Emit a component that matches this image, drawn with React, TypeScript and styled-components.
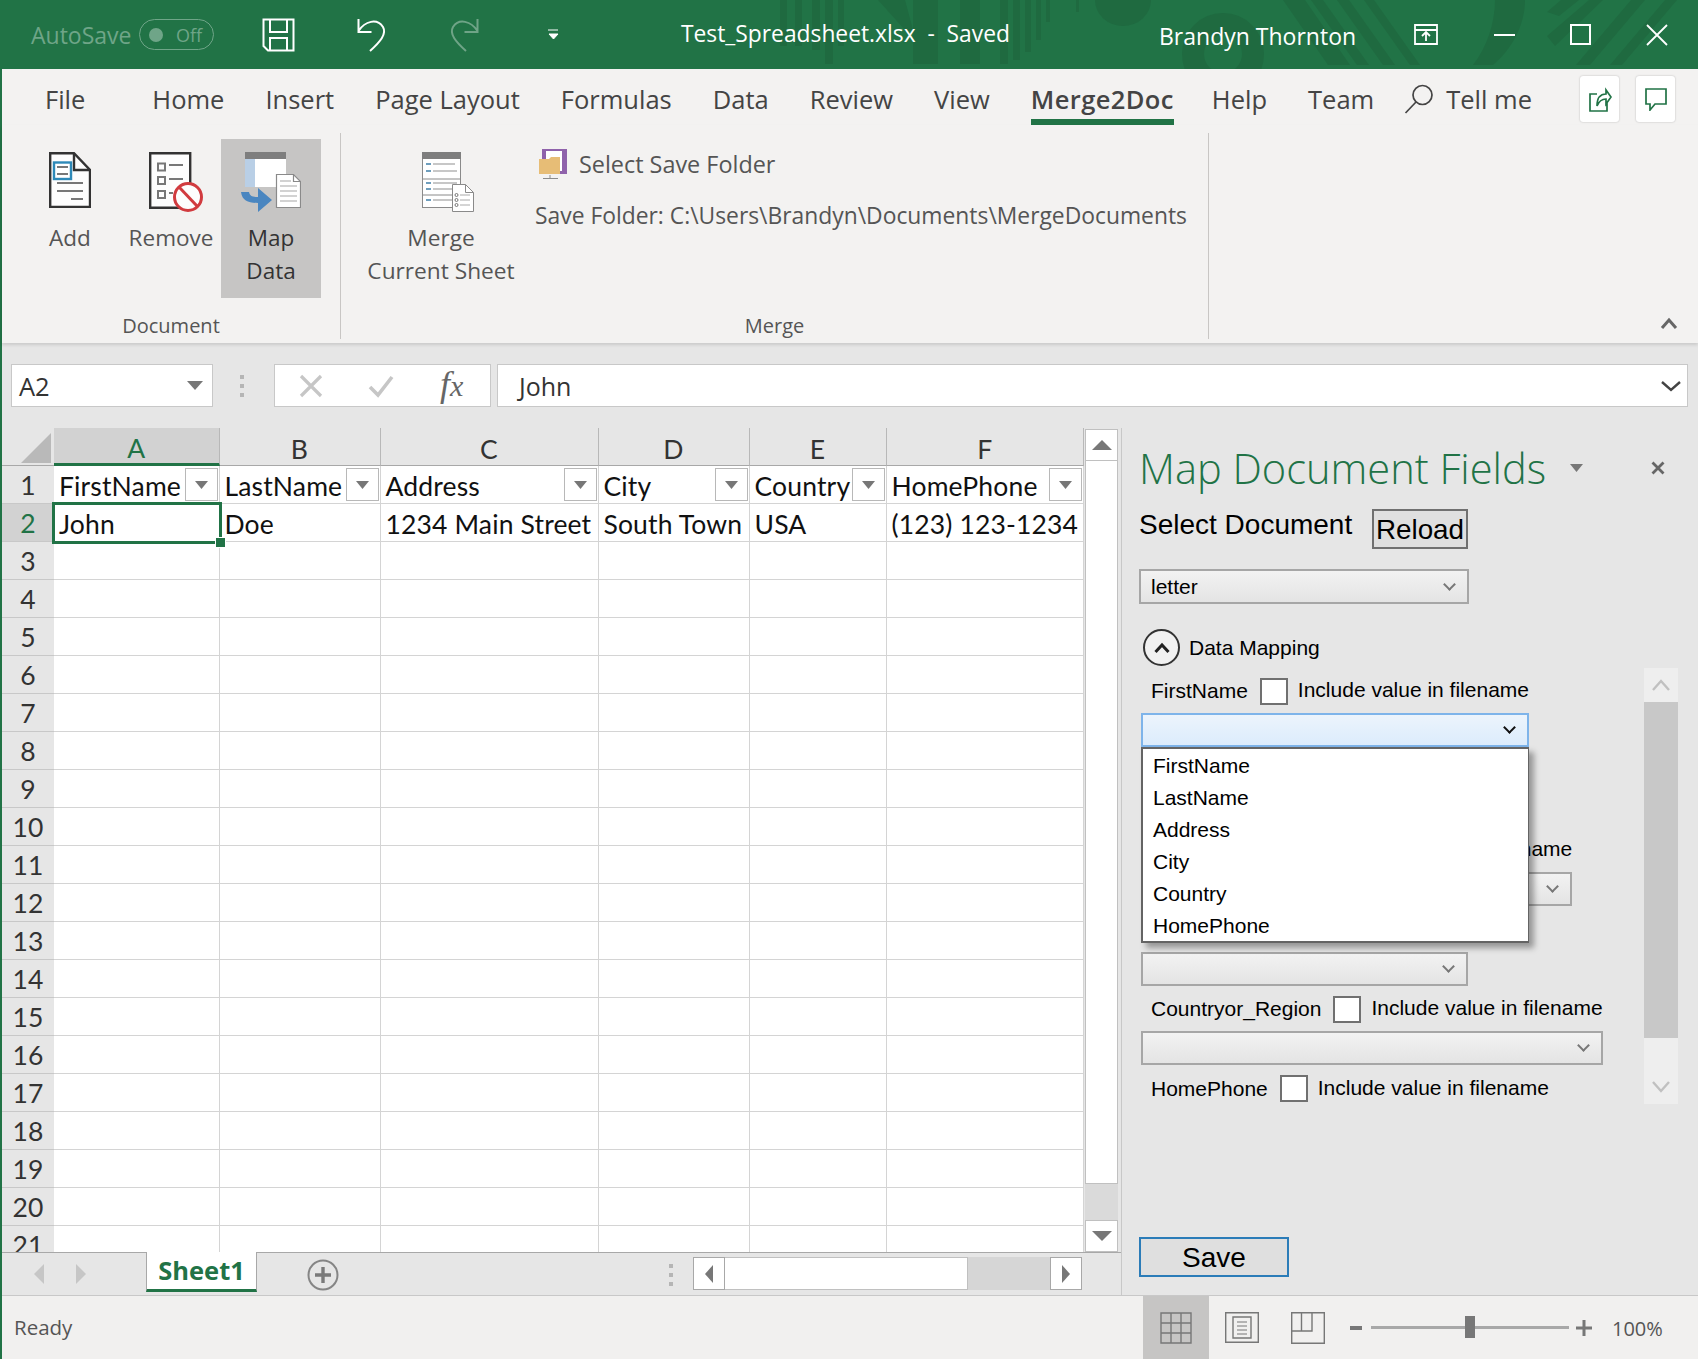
import React from "react";
import styled, { createGlobalStyle } from "styled-components";

const GREEN = "#217346";
const ROW_COUNT = 21;
const COLUMNS = ["A", "B", "C", "D", "E", "F"];
const HEAD = ["FirstName", "LastName", "Address", "City", "Country", "HomePhone"];
const ROW2 = ["John", "Doe", "1234 Main Street", "South Town", "USA", "(123) 123-1234"];
const TABS = ["Home", "Insert", "Page Layout", "Formulas", "Data", "Review", "View"];
const FIELDS = ["FirstName", "LastName", "AddressLine_1", "City", "Countryor_Region", "HomePhone"];
const OPTIONS = ["FirstName", "LastName", "Address", "City", "Country", "HomePhone"];

const GlobalStyle = createGlobalStyle`
  html, body { margin: 0; padding: 0; background: #e6e6e6; }
  * { box-sizing: border-box; }
  #root { width: 1698px; height: 1359px; overflow: hidden; }
`;

export default function App() {
  return (
    <Page>
      <GlobalStyle />
      <TitleBar>
        <TitlePattern viewBox="0 0 1698 69">
          <g fill="#1f6a40">
            <rect x="780" width="7" height="46" />
            <rect x="795" width="7" height="46" />
            <rect x="812" width="8" height="50" />
            <rect x="825" y="0" width="8" height="64" />
            <rect x="838" width="6" height="46" />
            <path d="M878 0h27l8 30v34h25V0h-25v30h-8z" />
            <rect x="960" width="20" height="64" />
            <rect x="1000" width="8" height="64" />
            <rect x="1013" width="7" height="60" />
            <rect x="1025" width="6" height="52" />
            <rect x="1036" width="5" height="40" />
            <rect x="1046" width="4" height="22" />
            <rect x="1076" width="3" height="12" />
            <path d="M1095 0a28 26 0 0 0 56 0z" />
            <path d="M1283 0h22l45 65h-22zM1311 0h12l46 65h-12zM1337 0h12l46 65h-12zM1364 0h10l46 65h-10z" />
            <path d="M1495 0h30c0 26-14 50-32 65h-20c14-18 22-42 22-65z" />
            <path d="M1547 12l14-12h18l-20 16zM1547 36l42-36h14l-48 46zM1576 65l55-65h14l-55 65zM1610 65l55-65h12l-55 65z" />
          </g>
          <circle cx="1223" cy="54" r="30" fill="none" stroke="#1f6a40" strokeWidth="22" />
        </TitlePattern>
        <AutoSave>AutoSave</AutoSave>
        <Toggle>
          <ToggleDot />
          <span>Off</span>
        </Toggle>
        <QuickIcon $left={48} width="33" height="34" viewBox="0 0 33 34">
          <path d="M1.500 1.500h30v31H6l-4.500-4.500z" fill="none" stroke="#fff" strokeWidth="2" />
          <path d="M8 2v12h17V2M8 33V20h17v13" fill="none" stroke="#fff" strokeWidth="2" />
        </QuickIcon>
        <QuickIcon $left={62} width="30" height="34" viewBox="0 0 30 34">
          <path d="M1.500 1v13h13M1.500 13C8 3 20 0 26 9c4 7-3 15-13 24" fill="none" stroke="#fff" strokeWidth="2" />
        </QuickIcon>
        <QuickIcon $left={62} width="30" height="34" viewBox="0 0 30 34" opacity={0.35}>
          <path d="M28.500 1v13h-13M28.500 13C22 3 10 0 4 9c-4 7 3 15 13 24" fill="none" stroke="#fff" strokeWidth="2" />
        </QuickIcon>
        <QuickIcon $left={69} width="11" height="12" viewBox="0 0 11 12">
          <path d="M0 1h10M1 5h9l-4.500 5z" fill="#fff" stroke="#fff" strokeWidth="1" />
        </QuickIcon>
        <FileName>Test_Spreadsheet.xlsx&nbsp; - &nbsp;Saved</FileName>
        <UserName>Brandyn Thornton</UserName>
        <QuickIcon $left={61} width="24" height="21" viewBox="0 0 24 21">
          <path d="M1 1h22v19H1zM1 6h22M12 17V9M8 12l4-4 4 4" fill="none" stroke="#fff" strokeWidth="1.800" />
        </QuickIcon>
        <QuickIcon $left={56} width="21" height="4" viewBox="0 0 21 4">
          <path d="M0 2h21" stroke="#fff" strokeWidth="2" />
        </QuickIcon>
        <QuickIcon $left={55} width="21" height="21" viewBox="0 0 21 21">
          <rect x="1" y="1" width="19" height="19" fill="none" stroke="#fff" strokeWidth="2" />
        </QuickIcon>
        <QuickIcon $left={55} width="22" height="22" viewBox="0 0 22 22">
          <path d="M1 1l20 20M21 1L1 21" stroke="#fff" strokeWidth="1.800" />
        </QuickIcon>
      </TitleBar>

      <Body>
        <TabRow>
          <Tab $gap={67}>File</Tab>
          {TABS.map((t) => (
            <Tab key={t} $gap={41}>
              {t}
            </Tab>
          ))}
          <ActiveTab $gap={38}>Merge2Doc</ActiveTab>
          <Tab $gap={41}>Help</Tab>
          <Tab $gap={30}>Team</Tab>
          <TellMe>
            <svg width="30" height="30" viewBox="0 0 30 30">
              <circle cx="18.500" cy="11" r="9.500" fill="none" stroke="#444" strokeWidth="1.700" />
              <path d="M12 18L1.500 29" stroke="#444" strokeWidth="1.700" />
            </svg>
            Tell me
          </TellMe>
          <TabActions>
            <TabAction>
              <svg width="24" height="26" viewBox="0 0 24 26">
                <path d="M9 8H2v17h17v-8M9 20c0-8 3-12 9-12V4l5 7-5 7v-5c-4 0-7 2-9 7z" fill="none" stroke={GREEN} strokeWidth="1.700" />
              </svg>
            </TabAction>
            <TabAction>
              <svg width="24" height="24" viewBox="0 0 24 24">
                <path d="M2 2h20v15H11l-5 6v-6H2z" fill="none" stroke={GREEN} strokeWidth="1.700" />
              </svg>
            </TabAction>
          </TabActions>
        </TabRow>

        <Ribbon>
          <DocumentGroup>
            <GroupButtons $inset={28}>
              <AddButton>
                <IconBox>
                  <svg width="42" height="56" viewBox="0 0 42 56">
                    <path d="M1.200 1.200H25L41 18v37H1.200z" fill="#fdfdfd" stroke="#333" strokeWidth="2.400" />
                    <path d="M25 1.200V18h16" fill="none" stroke="#333" strokeWidth="2.400" />
                    <rect x="5" y="10.500" width="17" height="16.500" fill="#fff" stroke="#2d89b8" strokeWidth="2.400" />
                    <path d="M8 15h11M8 22h11M8 31h26M8 39h26M22 47h12" stroke="#777" strokeWidth="2" />
                  </svg>
                </IconBox>
                Add
              </AddButton>
              <RibbonButton>
                <IconBox $nudge={10}>
                  <svg width="54" height="60" viewBox="0 0 54 60">
                    <path d="M1.200 1.200h40v54.600H1.200z" fill="#fdfdfd" stroke="#333" strokeWidth="2.400" />
                    <path d="M9 11.500h7v7H9zM9 25h7v7H9zM9 39h7v7H9z" fill="none" stroke="#777" strokeWidth="2" />
                    <path d="M20 13h14M20 27h14M20 41h4" stroke="#777" strokeWidth="2" />
                    <circle cx="39" cy="45" r="13.500" fill="#fdfdfd" stroke="#d13b3f" strokeWidth="3" />
                    <path d="M30 35l18 19" stroke="#d13b3f" strokeWidth="3" />
                  </svg>
                </IconBox>
                Remove
              </RibbonButton>
              <RibbonButton $active>
                <IconBox>
                  <svg width="60" height="60" viewBox="0 0 60 60">
                    <rect x="4" y="0" width="41" height="35" fill="#fff" />
                    <rect x="4" y="7" width="10" height="28" fill="#b9cfe6" />
                    <rect x="4" y="0" width="41" height="7" fill="#7e7e7e" />
                    <path d="M35.500 22.500h17l7 7v26h-24z" fill="#fff" stroke="#8a8a8a" strokeWidth="1.200" />
                    <path d="M52.500 22.500v7h7" fill="none" stroke="#8a8a8a" strokeWidth="1.200" />
                    <path d="M39 29h11M39 34h17M39 39h17M39 44h17M39 49h17" stroke="#a5a5a5" strokeWidth="1.200" />
                    <path d="M0 40h8c1 4 3 5 9 5v-9l14 12-14 12v-9C8 51 1 49 0 40z" fill="#4a86c0" />
                  </svg>
                </IconBox>
                Map
                <br />
                Data
              </RibbonButton>
            </GroupButtons>
            <GroupLabel>Document</GroupLabel>
          </DocumentGroup>
          <MergeGroup>
            <GroupButtons $inset={21}>
              <MergeButton>
                <IconBox $nudge={13}>
                  <svg width="52" height="60" viewBox="0 0 52 60">
                    <rect x="0.500" y="0.500" width="38" height="55" fill="#fff" stroke="#8a8a8a" />
                    <rect x="0" y="0" width="39" height="7" fill="#7e7e7e" />
                    <path d="M1 27h37M1 43h37" stroke="#8a8a8a" />
                    <path d="M4 12h5M4 19h5M4 31h5M4 37h5M4 48h5" stroke="#3f7fa8" strokeWidth="1.300" />
                    <path d="M11 12h22M11 19h24M11 31h24M11 37h24M11 48h24" stroke="#b5b5b5" strokeWidth="1.300" />
                    <path d="M30.500 32.500h13l8 8v19h-21z" fill="#fff" stroke="#8a8a8a" />
                    <path d="M43.500 32.500v8h8" fill="none" stroke="#8a8a8a" />
                    <circle cx="34.500" cy="43" r="1.500" fill="none" stroke="#777" />
                    <circle cx="34.500" cy="48" r="1.500" fill="none" stroke="#777" />
                    <circle cx="34.500" cy="53" r="1.500" fill="none" stroke="#777" />
                    <path d="M38 43h10M38 48h10M38 53h10" stroke="#aaa" />
                  </svg>
                </IconBox>
                Merge
                <br />
                Current Sheet
              </MergeButton>
              <FolderColumn>
                <FolderLink>
                  <svg width="28" height="30" viewBox="0 0 28 30">
                    <rect x="3" y="0" width="25" height="25" fill="#8f62ab" />
                    <rect x="7" y="2" width="16" height="20" fill="#fff" />
                    <path d="M0 10h10l2-2h9v17H0z" fill="#e7bd76" />
                    <path d="M11 26v3M4 29.500h15" stroke="#8a8a8a" />
                  </svg>
                  Select Save Folder
                </FolderLink>
                <FolderPath>Save Folder: C:\Users\Brandyn\Documents\MergeDocuments</FolderPath>
              </FolderColumn>
            </GroupButtons>
            <GroupLabel>Merge</GroupLabel>
          </MergeGroup>
          <RibbonEnd>
            <svg width="18" height="14" viewBox="0 0 18 14">
              <path d="M2 12l7-8 7 8" fill="none" stroke="#666" strokeWidth="3" />
            </svg>
          </RibbonEnd>
        </Ribbon>

        <FormulaBar>
          <NameBox>
            A2
            <svg width="16" height="10" viewBox="0 0 16 10">
              <path d="M0 0h16l-8 9z" fill="#777" />
            </svg>
          </NameBox>
          <GripDots />
          <FormulaButtons>
            <svg width="24" height="24" viewBox="0 0 24 24">
              <path d="M2 2l20 20M22 2L2 22" stroke="#c6c6c6" strokeWidth="3.200" />
            </svg>
            <svg width="26" height="24" viewBox="0 0 26 24">
              <path d="M2 13l8 8L24 3" fill="none" stroke="#c6c6c6" strokeWidth="3.600" />
            </svg>
            <FxLabel>
              f<i>x</i>
            </FxLabel>
          </FormulaButtons>
          <FormulaInput>
            John
            <svg width="22" height="12" viewBox="0 0 22 12">
              <path d="M2 2l9 8 9-8" fill="none" stroke="#444" strokeWidth="2.400" />
            </svg>
          </FormulaInput>
        </FormulaBar>

        <Main>
          <SheetColumn>
            <SheetRow>
              <Grid>
                <Corner>
                  <svg width="30" height="30" viewBox="0 0 30 30">
                    <path d="M0 30L30 0v30z" fill="#b9b9b9" />
                  </svg>
                </Corner>
                {COLUMNS.map((c, i) => (
                  <ColHead key={c} $active={i === 0}>
                    {c}
                  </ColHead>
                ))}
                {Array.from({ length: ROW_COUNT }, (_, r) => (
                  <React.Fragment key={r}>
                    <RowHead $active={r === 1}>{r + 1}</RowHead>
                    {COLUMNS.map((c, i) => (
                      <Cell key={c} $selected={r === 1 && i === 0}>
                        {r === 0 && HEAD[i]}
                        {r === 0 && (
                          <FilterButton>
                            <svg width="13" height="8" viewBox="0 0 13 8">
                              <path d="M0 0h13L6.500 8z" fill="#777" />
                            </svg>
                          </FilterButton>
                        )}
                        {r === 1 && ROW2[i]}
                        {r === 1 && i === 0 && <FillHandle />}
                      </Cell>
                    ))}
                  </React.Fragment>
                ))}
              </Grid>
              <VScroll>
                <ScrollEnd>
                  <svg width="20" height="10" viewBox="0 0 20 10">
                    <path d="M10 0l10 10H0z" fill="#777" />
                  </svg>
                </ScrollEnd>
                <VThumb />
                <VTrack />
                <ScrollEnd>
                  <svg width="20" height="10" viewBox="0 0 20 10">
                    <path d="M10 10L0 0h20z" fill="#777" />
                  </svg>
                </ScrollEnd>
              </VScroll>
            </SheetRow>
            <SheetTabs>
              <TabNav>
                <svg width="10" height="20" viewBox="0 0 10 20">
                  <path d="M10 0v20L0 10z" fill="#c6c6c6" />
                </svg>
                <svg width="10" height="20" viewBox="0 0 10 20">
                  <path d="M0 0v20l10-10z" fill="#c6c6c6" />
                </svg>
              </TabNav>
              <SheetTab>Sheet1</SheetTab>
              <AddSheet>
                <svg width="32" height="32" viewBox="0 0 32 32">
                  <circle cx="16" cy="16" r="14.500" fill="none" stroke="#858585" strokeWidth="2" />
                  <path d="M16 8v16M8 16h16" stroke="#7a7a7a" strokeWidth="3.400" />
                </svg>
              </AddSheet>
              <SplitDots />
              <HScroll>
                <HButton>
                  <svg width="8" height="18" viewBox="0 0 8 18">
                    <path d="M8 0v18L0 9z" fill="#777" />
                  </svg>
                </HButton>
                <HThumb />
                <HTrack />
                <HButton>
                  <svg width="8" height="18" viewBox="0 0 8 18">
                    <path d="M0 0v18l8-9z" fill="#777" />
                  </svg>
                </HButton>
              </HScroll>
            </SheetTabs>
          </SheetColumn>

          <TaskPane>
            <PaneHeader>
              <PaneTitle>Map Document Fields</PaneTitle>
              <PaneCaret viewBox="0 0 13 8" width="13" height="8">
                <path d="M0 0h13L6.500 8z" fill="#777" />
              </PaneCaret>
              <PaneClose viewBox="0 0 14 14" width="14" height="14">
                <path d="M1.500 1.500l11 11M12.500 1.500l-11 11" stroke="#666" strokeWidth="2.800" />
              </PaneClose>
            </PaneHeader>
            <DocumentRow>
              <DocumentLabel>Select Document</DocumentLabel>
              <ReloadButton>Reload</ReloadButton>
            </DocumentRow>
            <DocumentSelect>
              letter
              <Chevron />
            </DocumentSelect>
            <SectionRow>
              <SectionToggle>
                <svg width="18" height="12" viewBox="0 0 18 12">
                  <path d="M2.500 10L9 3l6.500 7" fill="none" stroke="#222" strokeWidth="3" />
                </svg>
              </SectionToggle>
              Data Mapping
            </SectionRow>
            <MappingPanel>
              <MappingList>
                {FIELDS.map((f, i) => (
                  <Field key={f}>
                    <FieldRow>
                      <span>{f}</span>
                      <CheckBox />
                      <IncludeText>Include value in filename</IncludeText>
                    </FieldRow>
                    {i === 0 ? (
                      <FocusedSelect>
                        <Chevron $dark />
                      </FocusedSelect>
                    ) : (
                      <FieldSelect>
                        <Chevron />
                      </FieldSelect>
                    )}
                    {i === 0 && (
                      <OptionList>
                        {OPTIONS.map((o) => (
                          <Option key={o}>{o}</Option>
                        ))}
                      </OptionList>
                    )}
                  </Field>
                ))}
              </MappingList>
              <PanelScroll>
                <PanelEnd>
                  <svg width="20" height="14" viewBox="0 0 20 14">
                    <path d="M2 12l8-9 8 9" fill="none" stroke="#c0c0c0" strokeWidth="2.400" />
                  </svg>
                </PanelEnd>
                <PanelThumb />
                <PanelTrack>
                  <svg width="20" height="14" viewBox="0 0 20 14">
                    <path d="M2 2l8 9 8-9" fill="none" stroke="#c0c0c0" strokeWidth="2.400" />
                  </svg>
                </PanelTrack>
              </PanelScroll>
            </MappingPanel>
            <SaveButton>Save</SaveButton>
          </TaskPane>
        </Main>

        <StatusBar>
          <Ready>Ready</Ready>
          <ViewButton $active>
            <svg width="32" height="32" viewBox="0 0 32 32">
              <path d="M1 1h30v30H1zM1 11h30M1 21h30M11 1v30M21 1v30" fill="none" stroke="#777" strokeWidth="1.400" />
            </svg>
          </ViewButton>
          <ViewButton>
            <svg width="34" height="31" viewBox="0 0 34 31">
              <path d="M.7.7h32.600v29.600H.7z" fill="none" stroke="#777" strokeWidth="1.400" />
              <path d="M8 5h18v21H8z" fill="none" stroke="#777" strokeWidth="1.400" />
              <path d="M12 10h10M12 14h10M12 18h10M12 22h10" stroke="#777" />
            </svg>
          </ViewButton>
          <ViewButton>
            <svg width="34" height="32" viewBox="0 0 34 32">
              <path d="M.7.7h32.600v30.600H.7zM.7 19h20.300V.7M10.500.7V19" fill="none" stroke="#777" strokeWidth="1.400" />
            </svg>
          </ViewButton>
          <ZoomMinus />
          <ZoomTrack>
            <ZoomThumb />
          </ZoomTrack>
          <ZoomPlus>
            <svg width="16" height="16" viewBox="0 0 16 16">
              <path d="M8 0v16M0 8h16" stroke="#777" strokeWidth="3" />
            </svg>
          </ZoomPlus>
          <ZoomValue>100%</ZoomValue>
        </StatusBar>
      </Body>
    </Page>
  );
}

const UI_FONT = `"Open Sans", "Noto Sans", sans-serif`;
const FORM_FONT = `"Liberation Sans", Arial, sans-serif`;

const Page = styled.div`
  width: 1698px;
  height: 1359px;
  display: flex;
  flex-direction: column;
  font-family: ${UI_FONT};
  color: #444;
  overflow: hidden;
`;

const TitleBar = styled.header`
  position: relative;
  height: 69px;
  flex: none;
  display: flex;
  align-items: center;
  padding-left: 31px;
  background: ${GREEN};
  color: #fff;
`;

const TitlePattern = styled.svg`
  position: absolute;
  left: 0;
  top: 0;
  width: 1698px;
  height: 69px;
`;

const AutoSave = styled.span`
  position: relative;
  font-size: 23px;
  color: #6fa588;
  width: 108px;
  white-space: nowrap;
`;

const Toggle = styled.div`
  position: relative;
  width: 75px;
  height: 31px;
  border: 1.500px solid #6fa588;
  border-radius: 16px;
  display: flex;
  align-items: center;
  padding-left: 9px;
  gap: 13px;
  font-size: 18px;
  color: #6fa588;
`;

const ToggleDot = styled.i`
  width: 14px;
  height: 14px;
  border-radius: 50%;
  background: #6fa588;
`;

const QuickIcon = styled.svg<{ $left: number }>`
  position: relative;
  flex: none;
  margin-left: ${(p) => p.$left}px;
`;

const FileName = styled.div`
  position: relative;
  margin-left: 122px;
  width: 335px;
  font-size: 22.800px;
  white-space: nowrap;
  margin-top: -2px;
`;

const UserName = styled.div`
  position: relative;
  margin-left: 143px;
  width: 194px;
  font-size: 23px;
  white-space: nowrap;
  margin-top: 3px;
`;

const Body = styled.div`
  flex: 1;
  display: flex;
  flex-direction: column;
  border-left: 2px solid ${GREEN};
  min-height: 0;
`;

const TabRow = styled.nav`
  height: 56px;
  flex: none;
  display: flex;
  align-items: flex-start;
  padding-left: 43px;
  background: #f3f2f1;
  font-size: 25.500px;
  color: #444;
  line-height: 60px;
`;

const Tab = styled.div<{ $gap: number }>`
  margin-right: ${(p) => p.$gap}px;
  white-space: nowrap;
  height: 56px;
`;

const ActiveTab = styled(Tab)`
  font-weight: 600;
  letter-spacing: 0.400px;
  border-bottom: 6px solid ${GREEN};
`;

const TellMe = styled.div`
  display: flex;
  align-items: center;
  gap: 12px;
  height: 60px;
`;

const TabActions = styled.div`
  display: flex;
  gap: 17px;
  margin-left: auto;
  margin-right: 23px;
  margin-top: 7px;
`;

const TabAction = styled.div`
  width: 39px;
  height: 46px;
  background: #fff;
  border-radius: 3px;
  box-shadow: 0 0 2px rgba(0, 0, 0, 0.25);
  display: flex;
  align-items: center;
  justify-content: center;
`;

const Ribbon = styled.section`
  height: 218px;
  flex: none;
  display: flex;
  background: #f3f2f1;
  box-shadow: 0 2px 3px rgba(0, 0, 0, 0.12);
  position: relative;
  padding-bottom: 4px;
`;

const DocumentGroup = styled.div`
  width: 339px;
  border-right: 1px solid #c8c6c4;
  margin-top: 8px;
  padding-top: 6px;
  display: flex;
  flex-direction: column;
`;

const MergeGroup = styled(DocumentGroup)`
  width: 868px;
`;

const GroupButtons = styled.div<{ $inset: number }>`
  display: flex;
  height: 164px;
  padding-left: ${(p) => p.$inset}px;
`;

const RibbonButton = styled.div<{ $active?: boolean }>`
  width: 100px;
  padding-top: 14px;
  text-align: center;
  font-size: 22.500px;
  line-height: 33px;
  color: ${(p) => (p.$active ? "#333" : "#555")};
  background: ${(p) => (p.$active ? "#c6c5c4" : "transparent")};
`;

const AddButton = styled(RibbonButton)`
  width: 80px;
  margin-right: 11px;
`;

const MergeButton = styled(RibbonButton)`
  width: 158px;
  white-space: nowrap;
  font-size: 22.700px;
`;

const IconBox = styled.div<{ $nudge?: number }>`
  height: 69px;
  margin-top: -1px;
  display: flex;
  justify-content: center;
  align-items: flex-start;
  padding-left: ${(p) => p.$nudge || 0}px;
`;

const GroupLabel = styled.div`
  text-align: center;
  font-size: 20px;
  color: #555;
  margin-top: 14px;
`;

const FolderColumn = styled.div`
  margin-left: 15px;
  color: #555;
  white-space: nowrap;
`;

const FolderLink = styled.div`
  display: flex;
  align-items: center;
  gap: 12px;
  height: 30px;
  margin-top: 10px;
  padding-left: 4px;
  font-size: 23.400px;
`;

const FolderPath = styled.div`
  margin-top: 20px;
  line-height: 34px;
  font-size: 22.850px;
`;

const RibbonEnd = styled.div`
  flex: 1;
  display: flex;
  justify-content: flex-end;
  align-items: flex-end;
  padding: 0 20px 9px 0;
`;

const FormulaBar = styled.div`
  height: 85px;
  flex: none;
  display: flex;
  align-items: flex-start;
  padding: 21px 10px 0 9px;
  background: #e6e6e6;
`;

const BoxBase = styled.div`
  height: 43px;
  background: #fff;
  border: 1px solid #c8c8c8;
  display: flex;
  align-items: center;
`;

const NameBox = styled(BoxBase)`
  width: 202px;
  padding: 0 9px 0 7px;
  justify-content: space-between;
  font-size: 25.500px;
  color: #333;
`;

const GripDots = styled.div`
  width: 4px;
  height: 22px;
  margin: 11px 30px 0 27px;
  background: repeating-linear-gradient(to bottom, #b5b5b5 0 4px, transparent 4px 9px);
`;

const FormulaButtons = styled(BoxBase)`
  width: 217px;
  padding-left: 24px;
  gap: 45px;
`;

const FxLabel = styled.span`
  font-family: "Liberation Serif", serif;
  font-style: italic;
  font-size: 36px;
  color: #666;
  margin-left: 1px;
  margin-top: -4px;
  i {
    font-size: 30px;
  }
`;

const FormulaInput = styled(BoxBase)`
  flex: 1;
  margin-left: 6px;
  padding: 0 5px 0 21px;
  justify-content: space-between;
  font-size: 25px;
  color: #333;
`;

const Main = styled.div`
  flex: 1;
  display: flex;
  min-height: 0;
  background: #e6e6e6;
`;

const SheetColumn = styled.div`
  width: 1120px;
  flex: none;
  display: flex;
  flex-direction: column;
  border-right: 1px solid #c8c8c8;
`;

const SheetRow = styled.div`
  height: 824px;
  flex: none;
  display: flex;
  overflow: hidden;
`;

const Grid = styled.div`
  display: grid;
  width: 1082px;
  grid-template-columns: 52px 165.500px 161px 218px 151px 137px 197.500px;
  grid-template-rows: 38px repeat(${ROW_COUNT}, 38px);
  font-family: Lato, "Open Sans", sans-serif;
  font-size: 26.500px;
  letter-spacing: 0.150px;
  color: #111;
  background: #fff;
`;

const HeadBase = styled.div`
  background: #e6e6e6;
  display: flex;
  align-items: center;
  justify-content: center;
  color: #333;
`;

const Corner = styled(HeadBase)`
  justify-content: flex-end;
  padding: 3px 3px 0 0;
  border-bottom: 1px solid #a8a8a8;
`;

const ColHead = styled(HeadBase)<{ $active?: boolean }>`
  padding-top: 5px;
  border-right: 1px solid #b8b8b8;
  background: ${(p) => (p.$active ? "#d2d2d2" : "#e6e6e6")};
  color: ${(p) => (p.$active ? GREEN : "#333")};
  border-bottom: ${(p) => (p.$active ? `3px solid ${GREEN}` : "1px solid #a8a8a8")};
`;

const RowHead = styled(HeadBase)<{ $active?: boolean }>`
  background: ${(p) => (p.$active ? "#d2d2d2" : "#e6e6e6")};
  color: ${(p) => (p.$active ? GREEN : "#333")};
  border-bottom: 1px solid #c8c8c8;
  padding-top: 1px;
`;

const Cell = styled.div<{ $selected?: boolean }>`
  position: relative;
  display: flex;
  align-items: center;
  padding: 2px 1px 0 5px;
  border-right: 1px solid #d4d4d4;
  border-bottom: 1px solid #d4d4d4;
  white-space: nowrap;
  ${(p) => p.$selected && `outline: 3px solid ${GREEN}; outline-offset: -1px; z-index: 2;`}
`;

const FilterButton = styled.div`
  margin-left: auto;
  width: 33px;
  height: 33px;
  margin-top: -2px;
  border: 1px solid #b8b8b8;
  background: #fff;
  display: flex;
  align-items: center;
  justify-content: center;
`;

const FillHandle = styled.i`
  position: absolute;
  right: -6px;
  bottom: -6px;
  width: 9px;
  height: 9px;
  background: ${GREEN};
  outline: 1px solid #fff;
`;

const VScroll = styled.div`
  width: 33px;
  margin-left: 1px;
  flex: none;
  display: flex;
  flex-direction: column;
  padding-top: 1px;
`;

const ScrollEnd = styled.div`
  height: 32px;
  background: #fff;
  border: 1px solid #c0c0c0;
  display: flex;
  align-items: center;
  justify-content: center;
  flex: none;
`;

const VThumb = styled.div`
  flex: none;
  height: 723px;
  background: #fff;
  border: 1px solid #c0c0c0;
  border-top: 0;
`;

const VTrack = styled.div`
  flex: 1;
  background: #dadada;
`;

const SheetTabs = styled.div`
  flex: 1;
  display: flex;
  align-items: flex-start;
  background: #e6e6e6;
  border-top: 1px solid #a8a8a8;
  position: relative;
`;

const TabNav = styled.div`
  width: 144px;
  height: 42px;
  display: flex;
  align-items: center;
  gap: 32px;
  padding-left: 32px;
`;

const SheetTab = styled.div`
  width: 111px;
  height: 40px;
  margin-top: -1px;
  background: #fff;
  border: 1px solid #a8a8a8;
  border-top: 0;
  border-bottom: 3px solid ${GREEN};
  text-align: center;
  font-family: ${UI_FONT};
  font-weight: 700;
  font-size: 25.500px;
  line-height: 37px;
  color: ${GREEN};
`;

const AddSheet = styled.div`
  width: 32px;
  height: 32px;
  margin: 6px 0 0 50px;
`;

const SplitDots = styled.div`
  width: 4px;
  height: 22px;
  margin: 11px 0 0 330px;
  background: repeating-linear-gradient(to bottom, #b5b5b5 0 4px, transparent 4px 9px);
`;

const HScroll = styled.div`
  width: 389px;
  height: 33px;
  margin: 4px 0 0 20px;
  display: flex;
`;

const HButton = styled.div`
  width: 32px;
  flex: none;
  background: #fff;
  border: 1px solid #a8a8a8;
  display: flex;
  align-items: center;
  justify-content: center;
`;

const HThumb = styled.div`
  width: 243px;
  background: #fff;
  border: 1px solid #c0c0c0;
  border-left: 0;
`;

const HTrack = styled.div`
  flex: 1;
  background: #d6d6d6;
`;

const TaskPane = styled.aside`
  flex: 1;
  display: flex;
  flex-direction: column;
  padding: 16px 0 18px 17px;
  background: #e6e6e6;
  color: #000;
  min-width: 0;
`;

const PaneHeader = styled.div`
  height: 50px;
  display: flex;
  align-items: center;
  flex: none;
`;

const PaneTitle = styled.h2`
  margin: -2px 0 0;
  width: 431px;
  font-family: ${UI_FONT};
  font-weight: 300;
  font-size: 41.600px;
  color: ${GREEN};
  white-space: nowrap;
`;

const PaneCaret = styled.svg`
  flex: none;
  margin-top: -3px;
`;

const PaneClose = styled.svg`
  flex: none;
  margin-left: 68px;
  margin-top: -3px;
`;

const DocumentRow = styled.div`
  display: flex;
  align-items: center;
  gap: 20px;
  margin-top: 15px;
  font-family: ${FORM_FONT};
  flex: none;
`;

const DocumentLabel = styled.span`
  font-size: 28px;
  width: 213px;
  white-space: nowrap;
  margin-top: -8px;
`;

const ReloadButton = styled.div`
  width: 96px;
  height: 40px;
  border: 2px solid #707070;
  background: #dfdfdf;
  font-size: 27.800px;
  line-height: 37px;
  text-align: center;
  white-space: nowrap;
`;

const SelectBase = styled.div`
  height: 34px;
  border: 2px solid #a6a6a6;
  background: linear-gradient(to bottom, #f2f2f2, #e4e4e4);
  display: flex;
  align-items: center;
  justify-content: space-between;
  padding: 0 10px;
  font-family: ${FORM_FONT};
`;

const DocumentSelect = styled(SelectBase)`
  width: 330px;
  height: 35px;
  margin-top: 20px;
  font-size: 21px;
  flex: none;
`;

const Chevron = styled.i<{ $dark?: boolean }>`
  width: 9px;
  height: 9px;
  margin: -5px 3px 0 auto;
  border-right: 2.500px solid ${(p) => (p.$dark ? "#111" : "#777")};
  border-bottom: 2.500px solid ${(p) => (p.$dark ? "#111" : "#777")};
  transform: rotate(45deg);
`;

const SectionRow = styled.div`
  display: flex;
  align-items: center;
  gap: 9px;
  height: 37px;
  margin: 25px 0 0 4px;
  font-family: ${FORM_FONT};
  font-size: 21px;
  flex: none;
`;

const SectionToggle = styled.div`
  width: 37px;
  height: 37px;
  border-radius: 50%;
  border: 2px solid #333;
  background: #f1f1f1;
  display: flex;
  align-items: center;
  justify-content: center;
`;

const MappingPanel = styled.div`
  height: 436px;
  margin-top: 2px;
  display: flex;
  flex: none;
  overflow: hidden;
`;

const MappingList = styled.div`
  width: 505px;
  flex: none;
  display: flex;
  flex-direction: column;
  align-items: flex-start;
  padding: 5px 0 0 2px;
  font-family: ${FORM_FONT};
  font-size: 21px;
`;

const Field = styled.div`
  position: relative;
  display: inline-flex;
  flex-direction: column;
  flex: none;
  margin-bottom: 5.500px;
`;

const FieldRow = styled.div`
  height: 36px;
  display: flex;
  align-items: center;
  padding-left: 10px;
  margin-bottom: 4px;
  white-space: nowrap;
`;

const CheckBox = styled.i`
  width: 28px;
  height: 27px;
  margin: 0 10px 0 12px;
  background: #fff;
  border: 2px solid #707070;
  flex: none;
`;

const IncludeText = styled.span`
  margin-top: -2px;
`;

const FieldSelect = styled(SelectBase)``;

const FocusedSelect = styled(SelectBase)`
  border-color: #7eb4ea;
  background: linear-gradient(to bottom, #ecf4fc, #dcecfc);
`;

const OptionList = styled.ul`
  position: absolute;
  top: 74px;
  left: 0;
  right: 0;
  z-index: 3;
  margin: 0;
  padding: 0;
  list-style: none;
  background: #fff;
  border: 2px solid #646464;
  border-right-width: 1px;
  box-shadow: 5px 5px 6px rgba(0, 0, 0, 0.35);
`;

const Option = styled.li`
  height: 32px;
  line-height: 33px;
  padding-left: 10px;
`;

const PanelScroll = styled.div`
  width: 34px;
  flex: none;
  display: flex;
  flex-direction: column;
`;

const PanelEnd = styled.div`
  height: 34px;
  flex: none;
  background: #eeeeee;
  display: flex;
  align-items: center;
  justify-content: center;
`;

const PanelThumb = styled.div`
  flex: none;
  height: 336px;
  background: #c8c8c8;
`;

const PanelTrack = styled(PanelEnd)`
  flex: 1;
  align-items: flex-end;
  padding-bottom: 10px;
`;

const SaveButton = styled.div`
  width: 150px;
  height: 40px;
  margin-top: auto;
  border: 2px solid #2b7cb8;
  background: #dfdfdf;
  font-family: ${FORM_FONT};
  font-size: 28px;
  line-height: 37px;
  text-align: center;
  flex: none;
`;

const StatusBar = styled.footer`
  height: 64px;
  flex: none;
  display: flex;
  align-items: center;
  border-top: 1px solid #c8c8c8;
  background: #f1f0ef;
  color: #555;
`;

const Ready = styled.div`
  width: 1141px;
  padding: 0 0 2px 12px;
  font-size: 20.500px;
  flex: none;
`;

const ViewButton = styled.div<{ $active?: boolean }>`
  width: 66px;
  height: 63px;
  flex: none;
  display: flex;
  align-items: center;
  justify-content: center;
  background: ${(p) => (p.$active ? "#c6c5c4" : "transparent")};
`;

const ZoomMinus = styled.i`
  width: 12px;
  height: 4px;
  margin-left: 9px;
  background: #777;
  flex: none;
`;

const ZoomTrack = styled.div`
  position: relative;
  width: 198px;
  height: 3px;
  margin-left: 9px;
  background: #a8a8a8;
  flex: none;
`;

const ZoomThumb = styled.i`
  position: absolute;
  left: 94px;
  top: -10px;
  width: 10px;
  height: 22px;
  background: #777;
`;

const ZoomPlus = styled.div`
  margin-left: 7px;
  display: flex;
  flex: none;
`;

const ZoomValue = styled.div`
  margin-left: 20px;
  font-size: 20px;
  margin-top: 2px;
  flex: none;
`;
